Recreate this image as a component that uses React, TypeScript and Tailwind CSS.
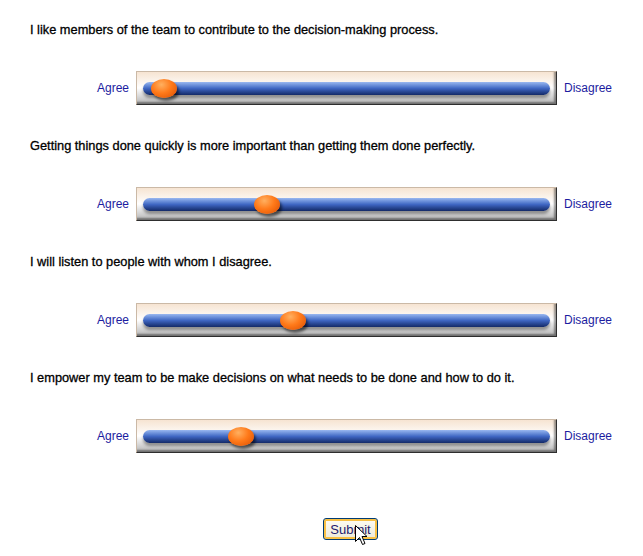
const questions = [
  { text: "I like members of the team to contribute to the decision-making process.", value: 27 },
  { text: "Getting things done quickly is more important than getting them done perfectly.", value: 130 },
  { text: "I will listen to people with whom I disagree.", value: 156 },
  { text: "I empower my team to be make decisions on what needs to be done and how to do it.", value: 104 },
];

function Slider({ value }: { value: number }) {
  return (
    <div className="relative w-[421px] h-[34px] border border-[#cbb9a6] border-b-[#2e2e2e] border-r-[#2e2e2e] bg-gradient-to-b from-[#f6e4d2] via-[#ffffff] to-[#b5b5b5] shadow-[inset_-2px_-2px_2px_rgba(0,0,0,0.4)]">
      {/* track */}
      <div className="absolute left-[6px] right-[6px] top-[10px] h-[13px] rounded-full bg-gradient-to-b from-[#9ab8f0] via-[#3f66c2] to-[#142a68] shadow-[0_3px_3px_rgba(0,0,0,0.35)]" />
      {/* thumb */}
      <div
        className="absolute top-[7px] w-[26px] h-[19px] rounded-[50%] bg-[radial-gradient(ellipse_at_40%_30%,#ffb060_0%,#ff7a1a_45%,#d94c00_100%)] shadow-[2px_3px_3px_rgba(0,0,0,0.55)]"
        style={{ left: value - 13 }}
      />
    </div>
  );
}

export default function App() {
  return (
    <div className="relative w-[643px] h-[556px] bg-white font-['Liberation_Sans',Arial,sans-serif] pt-[22px]">
      {questions.map((q, i) => (
        <div key={i} className="h-[116px]">
          <p className="pl-[30px] text-[12.8px] leading-[15px] text-black [-webkit-text-stroke:0.3px_#000]">{q.text}</p>
          <div className="flex items-center mt-[34px]">
            <div className="w-[136px] pr-[7px] text-right text-[12px] text-[#1c1ca0]">Agree</div>
            <Slider value={q.value} />
            <div className="pl-[7px] text-[12px] text-[#1c1ca0]">Disagree</div>
          </div>
        </div>
      ))}
      <div className="flex mt-[32px] pl-[323px]">
        <button className="w-[55px] h-[22px] rounded-[3px] border border-[#003c74] bg-gradient-to-b from-[#fffdf4] to-[#ece9d8] shadow-[inset_0_0_0_2px_#f8c044] text-[13px] text-[#241a6e] leading-none">
          Submit
        </button>
      </div>
      <svg
        className="absolute left-[355px] top-[525px]"
        width="13"
        height="21"
        viewBox="0 0 13 21"
      >
        <path
          d="M0.5 0.5 L0.5 16.5 L4.5 12.5 L7.5 19.5 L10 18.5 L7 11.5 L12 11.5 Z"
          fill="#fff"
          stroke="#000"
          strokeWidth="1"
          strokeLinejoin="miter"
        />
      </svg>
    </div>
  );
}
